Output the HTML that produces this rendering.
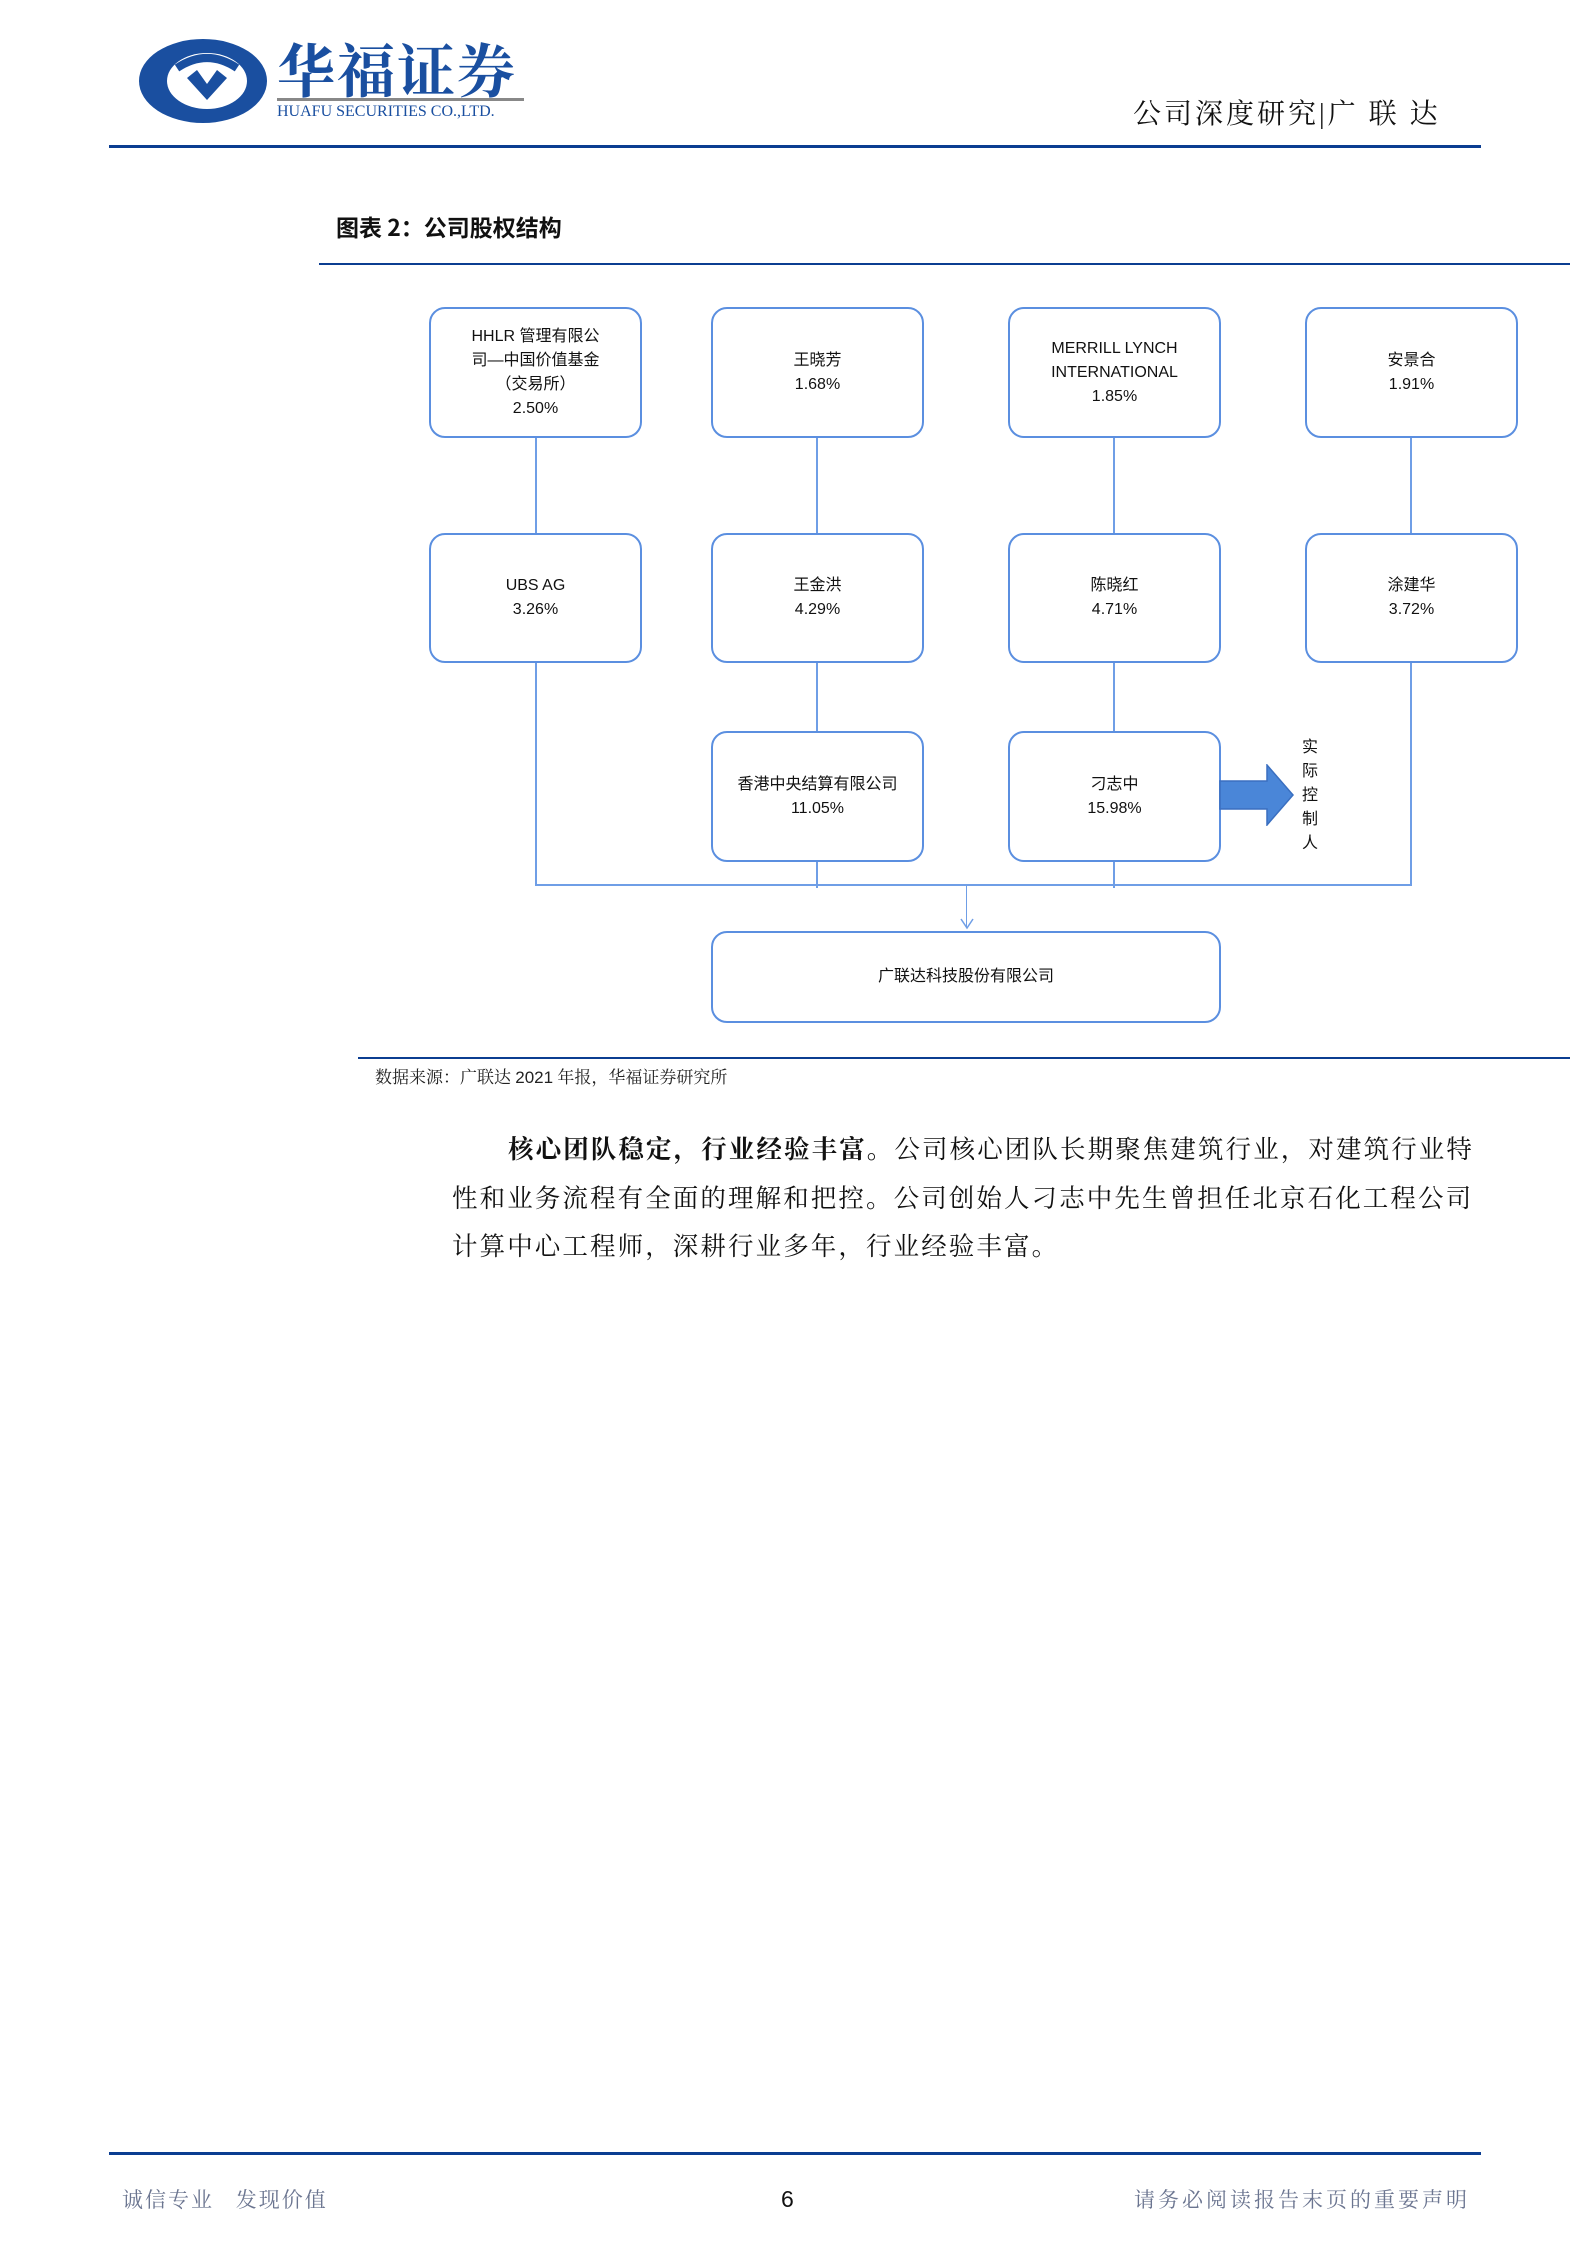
<!DOCTYPE html>
<html><head><meta charset="utf-8"><style>
body{margin:0;width:1587px;height:2245px;background:#fff;position:relative;overflow:hidden;font-family:"Liberation Serif","Noto Serif CJK SC",serif;}
.a{position:absolute;white-space:nowrap;}
.bx{position:absolute;border:2px solid #5b8fe0;border-radius:16px;box-sizing:border-box;display:flex;align-items:center;justify-content:center;text-align:center;font-family:"Liberation Sans","Noto Sans CJK SC",sans-serif;font-size:16px;line-height:24px;color:#111;}
.v{position:absolute;width:2px;background:#6f9ee6;}
.h{position:absolute;height:2px;background:#6f9ee6;}
</style></head><body>
<svg class="a" style="left:137px;top:38px" width="132" height="86" viewBox="0 0 132 86">
<ellipse cx="66" cy="43" rx="64" ry="42" fill="#1a4fa0"/>
<ellipse cx="70" cy="43" rx="40" ry="28" fill="#fff"/>
<path d="M50 40 L70 62 L90 40 L80 32 L70 46 L60 32 Z" fill="#1a4fa0"/>
<path d="M40 30 Q70 10 100 30" stroke="#1a4fa0" stroke-width="8" fill="none"/>
</svg>
<div class="a" style="left:277px;top:34px;font-size:58px;line-height:66px;color:#1a4fa0;font-family:'Noto Serif CJK SC',serif;font-weight:bold;letter-spacing:2px">华福证券</div>
<div class="a" style="left:277px;top:98px;width:247px;height:3px;background:#888"></div>
<div class="a" style="left:277px;top:103px;font-size:16px;color:#1a4fa0;font-family:'Liberation Serif',serif">HUAFU SECURITIES CO.,LTD.</div>
<div class="a" style="left:1133px;top:98px;font-size:28px;line-height:34px;color:#111;letter-spacing:3px">公司深度研究|广&nbsp;联&nbsp;达</div>
<div class="a" style="left:109px;top:145px;width:1372px;height:3px;background:#0b3d91"></div>
<div class="a" style="left:336px;top:211px;font-size:23px;line-height:30px;font-weight:bold;color:#111;font-family:'Noto Sans CJK SC',sans-serif">图表 2：公司股权结构</div>
<div class="a" style="left:319px;top:263px;width:1251px;height:2px;background:#0b3d91"></div>

<div class="v" style="left:535px;top:438px;height:95px"></div>
<div class="v" style="left:816px;top:438px;height:95px"></div>
<div class="v" style="left:1113px;top:438px;height:95px"></div>
<div class="v" style="left:1410px;top:438px;height:95px"></div>
<div class="v" style="left:535px;top:663px;height:223px"></div>
<div class="v" style="left:816px;top:663px;height:68px"></div>
<div class="v" style="left:1113px;top:663px;height:68px"></div>
<div class="v" style="left:1410px;top:663px;height:223px"></div>
<div class="v" style="left:816px;top:862px;height:26px"></div>
<div class="v" style="left:1113px;top:862px;height:26px"></div>
<div class="h" style="left:535px;top:884px;width:877px"></div>
<div class="v" style="left:966px;top:886px;height:42px;width:1px"></div>
<svg class="a" style="left:960px;top:918px" width="14" height="12"><path d="M1 1 L7 10 L13 1" stroke="#6f9ee6" stroke-width="1.5" fill="none"/></svg>

<div class="bx" style="left:429px;top:307px;width:213px;height:131px">HHLR 管理有限公<br>司—中国价值基金<br>（交易所）<br>2.50%</div>
<div class="bx" style="left:711px;top:307px;width:213px;height:131px">王晓芳<br>1.68%</div>
<div class="bx" style="left:1008px;top:307px;width:213px;height:131px">MERRILL LYNCH<br>INTERNATIONAL<br>1.85%</div>
<div class="bx" style="left:1305px;top:307px;width:213px;height:131px">安景合<br>1.91%</div>
<div class="bx" style="left:429px;top:533px;width:213px;height:130px">UBS AG<br>3.26%</div>
<div class="bx" style="left:711px;top:533px;width:213px;height:130px">王金洪<br>4.29%</div>
<div class="bx" style="left:1008px;top:533px;width:213px;height:130px">陈晓红<br>4.71%</div>
<div class="bx" style="left:1305px;top:533px;width:213px;height:130px">涂建华<br>3.72%</div>
<div class="bx" style="left:711px;top:731px;width:213px;height:131px">香港中央结算有限公司<br>11.05%</div>
<div class="bx" style="left:1008px;top:731px;width:213px;height:131px">刁志中<br>15.98%</div>
<div class="bx" style="left:711px;top:931px;width:510px;height:92px">广联达科技股份有限公司</div>
<svg class="a" style="left:1219px;top:764px" width="76" height="62"><path d="M1 17 H48 V1 L74 31 L48 61 V45 H1 Z" fill="#4a86d8" stroke="#3a6fc0" stroke-width="1.5"/></svg>
<div class="a" style="left:1302px;top:733px;width:20px;font-size:16px;line-height:24px;white-space:normal;font-family:'Noto Sans CJK SC',sans-serif;color:#111">实际控制人</div>

<div class="a" style="left:358px;top:1057px;width:1212px;height:2px;background:#0b3d91"></div>
<div class="a" style="left:375px;top:1066px;font-size:17px;line-height:24px;color:#222">数据来源：广联达 <span style="font-family:'Liberation Sans',sans-serif">2021</span> 年报，华福证券研究所</div>

<div class="a" style="left:452px;top:1124px;width:1030px;white-space:normal;font-size:25.5px;line-height:48.5px;letter-spacing:2.1px;color:#111;text-indent:56px;font-family:'Noto Serif CJK SC',serif"><b>核心团队稳定，行业经验丰富。</b>公司核心团队长期聚焦建筑行业，对建筑行业特性和业务流程有全面的理解和把控。公司创始人刁志中先生曾担任北京石化工程公司计算中心工程师，深耕行业多年，行业经验丰富。</div>

<div class="a" style="left:109px;top:2152px;width:1372px;height:3px;background:#0b3d91"></div>
<div class="a" style="left:122px;top:2186px;font-size:21px;line-height:28px;color:#6b7590;letter-spacing:2px">诚信专业&nbsp;&nbsp;&nbsp;发现价值</div>
<div class="a" style="left:781px;top:2185px;font-size:23px;line-height:28px;color:#111;font-family:'Liberation Sans',sans-serif">6</div>
<div class="a" style="left:1134px;top:2186px;font-size:21px;line-height:28px;color:#6b7590;letter-spacing:3px">请务必阅读报告末页的重要声明</div>
</body></html>
